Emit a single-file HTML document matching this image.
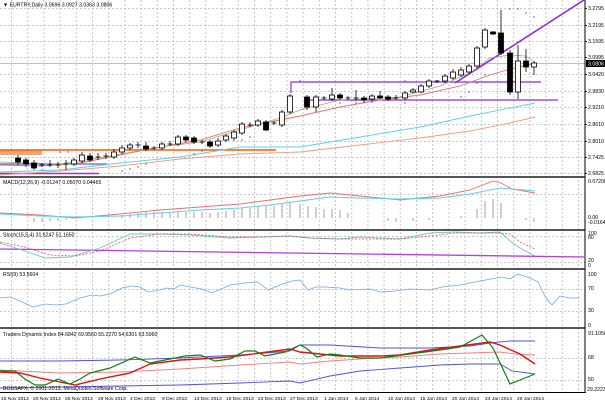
<!DOCTYPE html>
<html><head><meta charset="utf-8"><style>
html,body{margin:0;padding:0;background:#fff;width:605px;height:403px;overflow:hidden}
svg{display:block;font-family:"Liberation Sans",sans-serif}
text{font-size:5.2px;fill:#000}
.d{font-size:4.9px}
</style></head><body>
<svg width="605" height="403" viewBox="0 0 605 403" xmlns="http://www.w3.org/2000/svg">
<defs>
<pattern id="vg" x="11" y="0" width="16.2" height="403" patternUnits="userSpaceOnUse">
<line x1="0.5" y1="0" x2="0.5" y2="403" stroke="#b8b8b8" stroke-width="0.8" stroke-dasharray="2,2"/>
</pattern>
</defs>
<rect x="0" y="0" width="605" height="403" fill="#fff"/>
<rect x="0" y="0" width="585" height="392" fill="url(#vg)"/>
<g stroke="#b8b8b8" stroke-width="0.8" stroke-dasharray="2,2">
<line x1="0" y1="8.5" x2="585" y2="8.5"/><line x1="0" y1="25.5" x2="585" y2="25.5"/>
<line x1="0" y1="41.5" x2="585" y2="41.5"/><line x1="0" y1="57.5" x2="585" y2="57.5"/>
<line x1="0" y1="74.5" x2="585" y2="74.5"/><line x1="0" y1="91.5" x2="585" y2="91.5"/>
<line x1="0" y1="107.5" x2="585" y2="107.5"/><line x1="0" y1="124.5" x2="585" y2="124.5"/>
<line x1="0" y1="141.5" x2="585" y2="141.5"/><line x1="0" y1="157.5" x2="585" y2="157.5"/>
<line x1="0" y1="173.5" x2="585" y2="173.5"/>
<line x1="0" y1="194.5" x2="585" y2="194.5"/>
<line x1="0" y1="236.5" x2="585" y2="236.5"/><line x1="0" y1="262.5" x2="585" y2="262.5"/>
<line x1="0" y1="289.5" x2="585" y2="289.5"/><line x1="0" y1="311.5" x2="585" y2="311.5"/>
<line x1="0" y1="358.5" x2="585" y2="358.5"/><line x1="0" y1="380.5" x2="585" y2="380.5"/>
</g>
<line x1="0" y1="63.5" x2="585" y2="63.5" stroke="#aaa" stroke-width="0.8"/>

<g fill="#555">
<rect x="0" y="176" width="585" height="2"/>
<rect x="0" y="229" width="585" height="2"/>
<rect x="0" y="268" width="585" height="2"/>
<rect x="0" y="327" width="585" height="2"/>
</g>
<rect x="584.5" y="0" width="1" height="392" fill="#000"/>
<rect x="0" y="392" width="586" height="1" fill="#000"/>

<rect x="0" y="150" width="42" height="5" fill="#e8a878"/>
<line x1="0" y1="150" x2="276" y2="150" stroke="#ff5a00" stroke-width="1.6"/>
<line x1="0" y1="164" x2="107" y2="164" stroke="#6060e0" stroke-width="1.2"/>
<line x1="0" y1="173.5" x2="99" y2="173.5" stroke="#c020e0" stroke-width="1.6"/>
<polyline points="291,93 291,82 541,82" fill="none" stroke="#8a2be2" stroke-width="1.2"/>
<line x1="308" y1="100" x2="558" y2="100" stroke="#8a2be2" stroke-width="1.2"/>
<line x1="455" y1="83" x2="584" y2="0" stroke="#8a2be2" stroke-width="1.6"/>

<polyline fill="none" stroke="#e87070" stroke-width="0.9" points="0,165 40,166 80,163 120,155 160,147 200,140 240,128 280,120 300,116 340,107 380,100 420,95 460,86 490,75 510,69 535,63"/>
<polyline fill="none" stroke="#9aaa70" stroke-width="0.7" points="0,162 60,164 110,156 160,147 200,142 240,130 280,118 300,110 340,100 400,97 440,86 470,73 490,58 510,55 525,56 535,62"/>
<polyline fill="none" stroke="#60d0e0" stroke-width="0.9" points="0,172 60,170 120,163 180,157 240,147 300,147 360,137 420,127 470,116 510,108 535,103"/>
<polyline fill="none" stroke="#e8a080" stroke-width="0.9" points="0,175 60,171 120,166 180,159 240,154 300,152 360,145 420,138 470,131 510,123 535,117"/>
<g fill="#3050d0">
<circle cx="42" cy="170" r="0.7"/><circle cx="122" cy="171" r="0.7"/><circle cx="130" cy="169" r="0.7"/><circle cx="138" cy="167" r="0.7"/><circle cx="146" cy="164" r="0.7"/>
<circle cx="194" cy="154" r="0.7"/><circle cx="202" cy="151" r="0.7"/><circle cx="242" cy="140" r="0.7"/><circle cx="250" cy="137" r="0.7"/>
<circle cx="340" cy="103" r="0.7"/><circle cx="356" cy="103" r="0.7"/><circle cx="372" cy="102" r="0.7"/><circle cx="405" cy="103" r="0.7"/>
<circle cx="461" cy="97" r="0.7"/><circle cx="469" cy="92" r="0.7"/><circle cx="477" cy="83" r="0.7"/><circle cx="485" cy="75" r="0.7"/>
<circle cx="510" cy="9" r="0.7"/><circle cx="518" cy="9" r="0.7"/><circle cx="526" cy="13" r="0.7"/><circle cx="534" cy="17" r="0.7"/>
<circle cx="60" cy="152" r="0.7"/><circle cx="68" cy="152" r="0.7"/><circle cx="300" cy="81" r="0.7"/><circle cx="405" cy="81" r="0.7"/>
</g>

<g stroke="#000" stroke-width="0.8">
<line x1="18" y1="155" x2="18" y2="165"/><rect x="15.5" y="158" width="5" height="4" fill="#000"/>
<line x1="26" y1="158" x2="26" y2="167"/><rect x="23.5" y="160" width="5" height="4" fill="#000"/>
<line x1="34" y1="160" x2="34" y2="170"/><rect x="31.5" y="163" width="5" height="5" fill="#000"/>
<line x1="42" y1="163" x2="42" y2="167"/><line x1="39.5" y1="165" x2="44.5" y2="165"/>
<line x1="50" y1="160" x2="50" y2="167"/><line x1="47.5" y1="165" x2="52.5" y2="165"/>
<line x1="58" y1="162" x2="58" y2="168"/><line x1="55.5" y1="165" x2="60.5" y2="165"/>
<line x1="66" y1="160" x2="66" y2="170"/><line x1="63.5" y1="164" x2="68.5" y2="164"/>
<line x1="74" y1="158" x2="74" y2="166"/><rect x="71.5" y="160" width="5" height="4" fill="#fff"/>
<line x1="82" y1="152" x2="82" y2="163"/><rect x="79.5" y="155" width="5" height="6" fill="#fff"/>
<line x1="90" y1="153" x2="90" y2="162"/><rect x="87.5" y="156" width="5" height="4" fill="#000"/>
<line x1="98" y1="153" x2="98" y2="160"/><line x1="95.5" y1="157" x2="100.5" y2="157"/>
<line x1="106" y1="153" x2="106" y2="159"/><line x1="103.5" y1="156" x2="108.5" y2="156"/>
<line x1="114" y1="149" x2="114" y2="159"/><rect x="111.5" y="152" width="5" height="5" fill="#fff"/>
<line x1="122" y1="145" x2="122" y2="154"/><rect x="119.5" y="148" width="5" height="4" fill="#fff"/>
<line x1="130" y1="143" x2="130" y2="150"/><rect x="127.5" y="145" width="5" height="3" fill="#fff"/>
<line x1="138" y1="142" x2="138" y2="148"/><line x1="135.5" y1="145" x2="140.5" y2="145"/>
<line x1="146" y1="142" x2="146" y2="151"/><rect x="143.5" y="146" width="5" height="3" fill="#000"/>
<line x1="154" y1="146" x2="154" y2="150"/><line x1="151.5" y1="148" x2="156.5" y2="148"/>
<line x1="162" y1="142" x2="162" y2="150"/><rect x="159.5" y="144" width="5" height="4" fill="#fff"/>
<line x1="170" y1="141" x2="170" y2="146"/><line x1="167.5" y1="144" x2="172.5" y2="144"/>
<line x1="178" y1="135" x2="178" y2="146"/><rect x="175.5" y="137" width="5" height="7" fill="#fff"/>
<line x1="186" y1="135" x2="186" y2="142"/><rect x="183.5" y="137" width="5" height="3" fill="#000"/>
<line x1="194" y1="136" x2="194" y2="144"/><rect x="191.5" y="138" width="5" height="4" fill="#000"/>
<line x1="202" y1="140" x2="202" y2="144"/><line x1="199.5" y1="142" x2="204.5" y2="142"/>
<line x1="210" y1="140" x2="210" y2="148"/><rect x="207.5" y="142" width="5" height="4" fill="#000"/>
<line x1="218" y1="138" x2="218" y2="147"/><rect x="215.5" y="141" width="5" height="4" fill="#fff"/>
<line x1="226" y1="134" x2="226" y2="142"/><rect x="223.5" y="136" width="5" height="4" fill="#fff"/>
<line x1="234" y1="130" x2="234" y2="141"/><rect x="231.5" y="132" width="5" height="6" fill="#fff"/>
<line x1="242" y1="122" x2="242" y2="135"/><rect x="239.5" y="124" width="5" height="9" fill="#fff"/>
<line x1="250" y1="122" x2="250" y2="127"/><line x1="247.5" y1="125" x2="252.5" y2="125"/>
<line x1="258" y1="119" x2="258" y2="127"/><rect x="255.5" y="121" width="5" height="4" fill="#fff"/>
<line x1="266" y1="120" x2="266" y2="131"/><rect x="263.5" y="122" width="5" height="8" fill="#000"/>
<line x1="274" y1="121" x2="274" y2="125"/><line x1="271.5" y1="123" x2="276.5" y2="123"/>
<line x1="282" y1="110" x2="282" y2="127"/><rect x="279.5" y="112" width="5" height="13" fill="#fff"/>
<line x1="290" y1="94" x2="290" y2="114"/><rect x="287.5" y="96" width="5" height="16" fill="#fff"/>
<line x1="307" y1="95" x2="307" y2="110"/><rect x="304.5" y="97" width="5" height="10" fill="#000"/>
<line x1="316" y1="95" x2="316" y2="112"/><rect x="313.5" y="97" width="5" height="10" fill="#fff"/>
<line x1="324" y1="96" x2="324" y2="100"/><line x1="321.5" y1="98" x2="326.5" y2="98"/>
<line x1="332" y1="88" x2="332" y2="101"/><rect x="329.5" y="95" width="5" height="4" fill="#fff"/>
<line x1="340" y1="93" x2="340" y2="100"/><rect x="337.5" y="95" width="5" height="3" fill="#000"/>
<line x1="348" y1="96" x2="348" y2="100"/><line x1="345.5" y1="98" x2="350.5" y2="98"/>
<line x1="356" y1="90" x2="356" y2="101"/><line x1="353.5" y1="98" x2="358.5" y2="98"/>
<line x1="364" y1="96" x2="364" y2="103"/><rect x="361.5" y="98" width="5" height="2" fill="#000"/>
<line x1="372" y1="94" x2="372" y2="101"/><rect x="369.5" y="96" width="5" height="3" fill="#fff"/>
<line x1="380" y1="91" x2="380" y2="99"/><rect x="377.5" y="96" width="5" height="2" fill="#000"/>
<line x1="388" y1="95" x2="388" y2="101"/><rect x="385.5" y="97" width="5" height="2" fill="#000"/>
<line x1="396" y1="95" x2="396" y2="100"/><line x1="393.5" y1="98" x2="398.5" y2="98"/>
<line x1="405" y1="91" x2="405" y2="100"/><rect x="402.5" y="93" width="5" height="5" fill="#fff"/>
<line x1="413" y1="88" x2="413" y2="93"/><rect x="410.5" y="90" width="5" height="2" fill="#fff"/>
<line x1="421" y1="84" x2="421" y2="93"/><rect x="418.5" y="86" width="5" height="6" fill="#fff"/>
<line x1="429" y1="79" x2="429" y2="88"/><rect x="426.5" y="81" width="5" height="5" fill="#fff"/>
<line x1="437" y1="80" x2="437" y2="83"/><line x1="434.5" y1="81" x2="439.5" y2="81"/>
<line x1="445" y1="74" x2="445" y2="83"/><rect x="442.5" y="76" width="5" height="5" fill="#fff"/>
<line x1="453" y1="69" x2="453" y2="80"/><rect x="450.5" y="72" width="5" height="6" fill="#fff"/>
<line x1="461" y1="67" x2="461" y2="77"/><rect x="458.5" y="70" width="5" height="5" fill="#fff"/>
<line x1="469" y1="64" x2="469" y2="74"/><rect x="466.5" y="66" width="5" height="6" fill="#fff"/>
<line x1="477" y1="46" x2="477" y2="68"/><rect x="474.5" y="48" width="5" height="18" fill="#fff"/>
<line x1="485" y1="28" x2="485" y2="49"/><rect x="482.5" y="30" width="5" height="17" fill="#fff"/>
<line x1="493" y1="31" x2="493" y2="35"/><rect x="490.5" y="32" width="5" height="2" fill="#000"/>
<line x1="501" y1="10" x2="501" y2="55"/><rect x="498.5" y="33" width="5" height="20" fill="#000"/>
<line x1="510" y1="50" x2="510" y2="95"/><rect x="507.5" y="53" width="5" height="39" fill="#000"/>
<line x1="518" y1="45" x2="518" y2="99"/><rect x="515.5" y="61" width="5" height="31" fill="#fff"/>
<line x1="526" y1="49" x2="526" y2="72"/><rect x="523.5" y="61" width="5" height="6" fill="#000"/>
<line x1="534" y1="61" x2="534" y2="75"/><rect x="531.5" y="63" width="5" height="4" fill="#fff"/>
</g>

<text x="3" y="6.5">▼ EURTRY,Daily  3.0696 3.0927 3.0363 3.0806</text>
<g>
<text x="588" y="10">3.2795</text><text x="588" y="27">3.2195</text><text x="588" y="43">3.1595</text>
<text x="588" y="59">3.0995</text><text x="588" y="76">3.0420</text><text x="588" y="93">2.9830</text>
<text x="588" y="109">2.9210</text><text x="588" y="126">2.8610</text><text x="588" y="143">2.8010</text>
<text x="588" y="159">2.7425</text><text x="588" y="175">2.6825</text>
</g>
<rect x="586" y="60" width="19" height="7" fill="#000"/>
<text x="588" y="65.5" style="fill:#fff">3.0806</text>
<g stroke="#000" stroke-width="0.8">
<line x1="585" y1="8.5" x2="587" y2="8.5"/><line x1="585" y1="25.5" x2="587" y2="25.5"/><line x1="585" y1="41.5" x2="587" y2="41.5"/><line x1="585" y1="57.5" x2="587" y2="57.5"/><line x1="585" y1="74.5" x2="587" y2="74.5"/><line x1="585" y1="91.5" x2="587" y2="91.5"/><line x1="585" y1="107.5" x2="587" y2="107.5"/><line x1="585" y1="124.5" x2="587" y2="124.5"/><line x1="585" y1="141.5" x2="587" y2="141.5"/><line x1="585" y1="157.5" x2="587" y2="157.5"/><line x1="585" y1="173.5" x2="587" y2="173.5"/>
</g>

<text x="3" y="184">MACD(12,26,9) -0.01247 0.05070 0.04465</text>
<g stroke="#888" stroke-width="0.8">
<line x1="34" y1="218" x2="34" y2="222"/><line x1="42" y1="218" x2="42" y2="222"/><line x1="50" y1="218" x2="50" y2="221"/><line x1="58" y1="218" x2="58" y2="221"/><line x1="66" y1="218" x2="66" y2="220"/>
<line x1="122" y1="218" x2="122" y2="215"/><line x1="130" y1="218" x2="130" y2="214"/><line x1="138" y1="218" x2="138" y2="213"/><line x1="146" y1="218" x2="146" y2="212"/><line x1="154" y1="218" x2="154" y2="212"/><line x1="162" y1="218" x2="162" y2="212"/><line x1="170" y1="218" x2="170" y2="212"/><line x1="178" y1="218" x2="178" y2="212"/><line x1="186" y1="218" x2="186" y2="212"/><line x1="194" y1="218" x2="194" y2="212"/><line x1="202" y1="218" x2="202" y2="212"/><line x1="210" y1="218" x2="210" y2="213"/><line x1="218" y1="218" x2="218" y2="212"/><line x1="226" y1="218" x2="226" y2="211"/><line x1="234" y1="218" x2="234" y2="210"/><line x1="242" y1="218" x2="242" y2="208"/><line x1="250" y1="218" x2="250" y2="208"/><line x1="258" y1="218" x2="258" y2="206"/><line x1="266" y1="218" x2="266" y2="206"/><line x1="274" y1="218" x2="274" y2="206"/><line x1="282" y1="218" x2="282" y2="204"/><line x1="290" y1="218" x2="290" y2="202"/><line x1="300" y1="218" x2="300" y2="204"/><line x1="308" y1="218" x2="308" y2="206"/><line x1="316" y1="218" x2="316" y2="207"/><line x1="324" y1="218" x2="324" y2="209"/><line x1="332" y1="218" x2="332" y2="209"/><line x1="340" y1="218" x2="340" y2="210"/><line x1="348" y1="218" x2="348" y2="213"/>
<line x1="388" y1="218" x2="388" y2="221"/><line x1="396" y1="218" x2="396" y2="222"/><line x1="413" y1="218" x2="413" y2="221"/><line x1="429" y1="218" x2="429" y2="220"/><line x1="461" y1="218" x2="461" y2="216"/><line x1="477" y1="218" x2="477" y2="209"/><line x1="485" y1="218" x2="485" y2="201"/><line x1="493" y1="218" x2="493" y2="199"/><line x1="501" y1="218" x2="501" y2="203"/><line x1="526" y1="218" x2="526" y2="220"/><line x1="534" y1="218" x2="534" y2="222"/>
</g>
<polyline fill="none" stroke="#e87070" stroke-width="0.9" points="0,213 40,215 75,218 120,214 160,210 200,207 240,204 270,200 300,196 330,193 360,196 400,200 440,196 470,190 493,181 501,183 512,189 535,193"/>
<polyline fill="none" stroke="#60d0e0" stroke-width="0.9" points="0,214 40,216 75,217 120,216 160,213 200,210 240,208 270,205 300,201 330,197 360,198 400,199 440,198 470,194 500,188 512,189 535,191"/>
<text x="588" y="183">0.07206</text><text x="588" y="219">0.00</text><text x="588" y="224">-0.01649</text>

<text x="3" y="236.5">Stoch(15,5,4) 31.6247 51.1650</text>
<line x1="0" y1="249" x2="585" y2="257" stroke="#b040e0" stroke-width="1.3"/>
<polyline fill="none" stroke="#70c8c0" stroke-width="0.9" points="0,243 25,251 45,258 70,257 100,248 130,234 160,234 190,235 230,238 260,237 290,236 310,238 340,239 360,237 400,239 430,233 455,232 480,233 500,232 510,241 520,248 535,256"/>
<polyline fill="none" stroke="#e04040" stroke-width="0.7" stroke-dasharray="2,1.5" points="0,242 25,247 50,255 75,256 100,251 130,238 160,234 190,234 230,237 260,237 290,236 310,238 340,239 360,239 400,239 430,236 455,233 480,233 500,233 510,234 520,242 535,249"/>
<text x="588" y="235">100</text><text x="588" y="239">80</text><text x="588" y="262">20</text><text x="588" y="267">0</text>

<text x="3" y="276">RSI(9) 53.5604</text>
<polyline fill="none" stroke="#70a8e0" stroke-width="0.8" points="0,298 10,297 20,301 33,307 45,304 56,305 66,304 80,298 92,295 100,296 110,294 122,288 132,286 140,287 148,292 160,290 166,288 174,289 180,285 190,287 202,289 212,293 230,285 245,283 258,282 268,290 280,285 292,281 300,280 308,290 316,287 326,287 340,288 350,290 370,289 380,292 395,291 410,289 430,290 442,287 460,285 480,281 502,277 510,279 518,274 530,278 538,282 546,298 552,305 560,296 570,298 580,298"/>
<text x="588" y="276">100</text><text x="588" y="290">70</text><text x="588" y="312">30</text><text x="588" y="327">0</text>

<text x="3" y="336">Traders Dynamic Index 84.6842 69.9560 55.2270 54.6301 63.5960</text>
<polyline fill="none" stroke="#5050e0" stroke-width="0.9" points="0,361 60,361 120,360 180,358 240,355 290,351 300,345 330,345 380,348 430,348 470,346 490,343 510,341 535,341"/>
<polyline fill="none" stroke="#5050e0" stroke-width="0.9" points="0,388 60,387 120,386 180,385 240,383 290,381 300,383 330,376 360,371 400,368 440,365 470,364 500,364 512,371 535,374"/>
<polyline fill="none" stroke="#f08080" stroke-width="0.9" points="0,370 60,373 120,372 180,369 240,365 290,362 300,364 330,361 360,359 400,357 440,354 470,353 500,352 515,354 535,355"/>
<polyline fill="none" stroke="#e01010" stroke-width="1.4" points="0,372 20,373 40,378 60,382 75,385 100,379 130,373 150,364 180,360 200,359 230,357 260,353 290,349 300,352 320,354 340,356 360,356 380,356 400,355 430,350 460,346 490,342 500,345 520,354 535,364"/>
<polyline fill="none" stroke="#108010" stroke-width="1.2" points="0,371 15,371 25,379 35,385 45,385 58,379 70,384 80,379 90,373 110,368 135,357 150,363 165,360 185,356 200,355 215,361 230,359 245,351 255,351 265,356 285,352 300,345 306,348 317,357 330,354 340,355 360,358 380,358 410,354 440,350 460,347 482,335 493,348 510,384 520,380 535,374"/>
<text x="3" y="390">BOSSAFX, © 2001-2013, MetaQuotes Software Corp.</text>
<text x="588" y="335">91.1050</text><text x="588" y="359">68</text><text x="588" y="381">50</text><text x="587" y="391">29.2223</text>

<g class="d">
<text class="d" x="1" y="400">15 Nov 2013</text><text class="d" x="33" y="400">20 Nov 2013</text><text class="d" x="65" y="400">25 Nov 2013</text>
<text class="d" x="98" y="400">29 Nov 2013</text><text class="d" x="130" y="400">4 Dec 2013</text><text class="d" x="162" y="400">9 Dec 2013</text>
<text class="d" x="194" y="400">13 Dec 2013</text><text class="d" x="226" y="400">18 Dec 2013</text><text class="d" x="258" y="400">23 Dec 2013</text>
<text class="d" x="290" y="400">27 Dec 2013</text><text class="d" x="324" y="400">1 Jan 2014</text><text class="d" x="355" y="400">6 Jan 2014</text>
<text class="d" x="388" y="400">10 Jan 2014</text><text class="d" x="420" y="400">15 Jan 2014</text><text class="d" x="452" y="400">20 Jan 2014</text>
<text class="d" x="485" y="400">24 Jan 2014</text><text class="d" x="517" y="400">29 Jan 2014</text>
</g>
</svg>
</body></html>
